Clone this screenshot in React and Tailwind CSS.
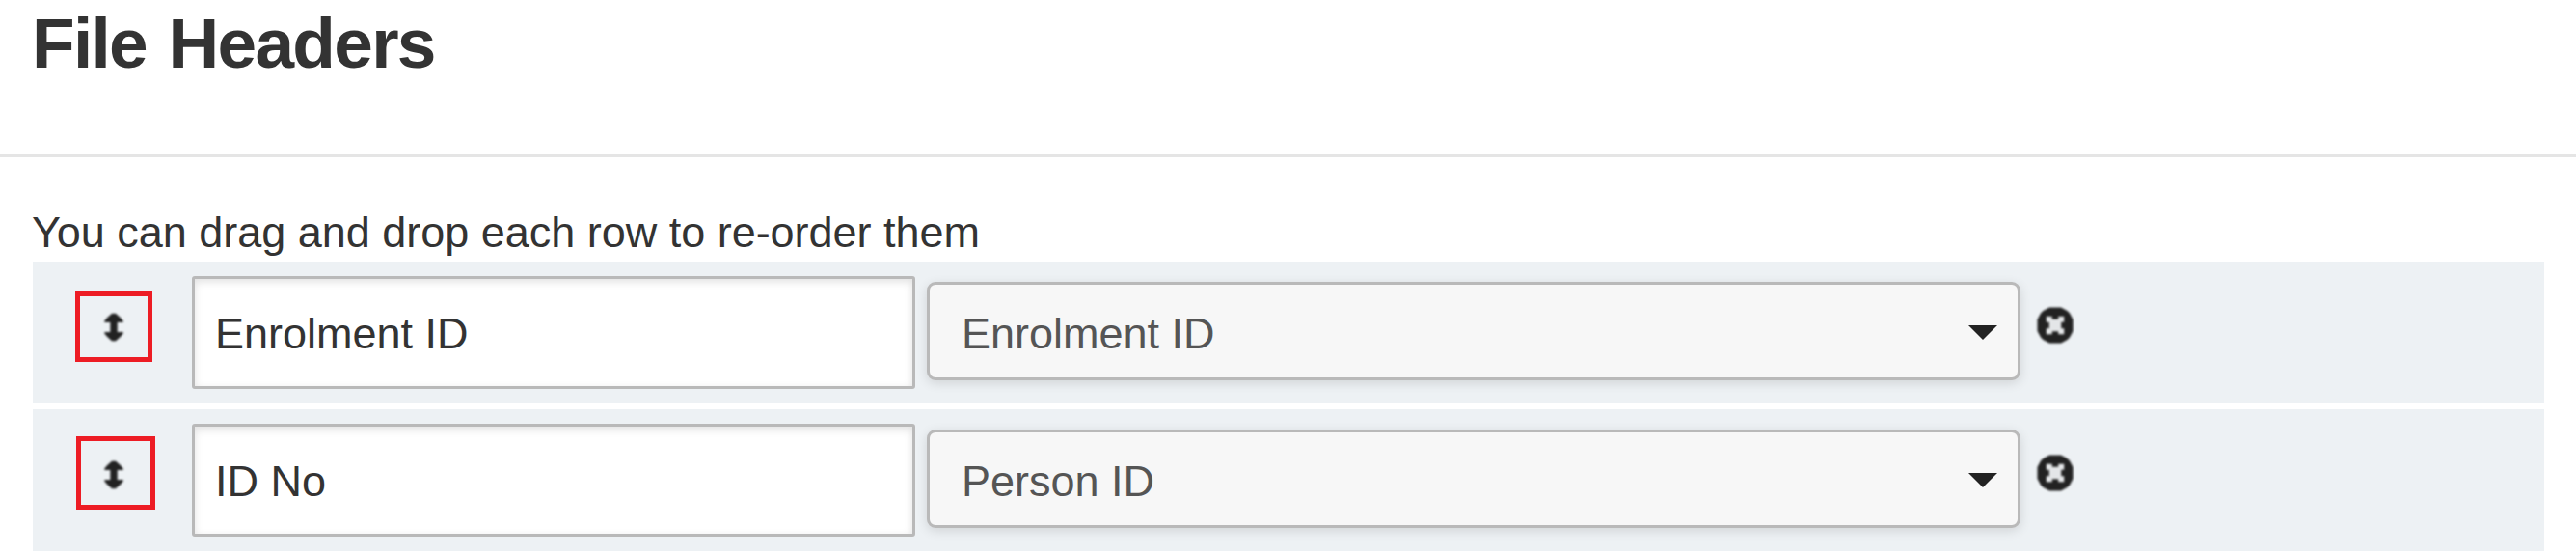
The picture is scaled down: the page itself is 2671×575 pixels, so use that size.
import { useState } from 'react';

const initialRows = [
  { id: 1, header: 'Enrolment ID', field: 'Enrolment ID', highlight: 'left-[44px] top-[31px] w-[80px] h-[73px]' },
  { id: 2, header: 'ID No', field: 'Person ID', highlight: 'left-[45px] top-[28px] w-[82px] h-[76px]' },
];

function DragIcon() {
  return (
    <svg className="block w-6 h-8 blur-[0.8px]" viewBox="0 0 24 32" fill="#222">
      <path d="M10 1.800h4l5 4.400 2.700 3.200v1.600h-6v10h6v1.600l-2.700 3.200-5 4.400h-4l-5-4.400-2.700-3.200v-1.600h6v-10h-6v-1.600l2.700-3.200z" />
    </svg>
  );
}

function RemoveIcon() {
  return (
    <svg className="block w-10 h-10 blur-[0.8px]" viewBox="0 0 40 40">
      <path d="M14 1.500h12L32.500 5l2.500 2.500 3.500 6.500v12L35 32.500 32.500 35 26 38.500H14L7.500 35 5 32.500 1.500 26V14L5 7.500 7.500 5z" fill="#222" />
      <path d="M10.800 10.800h6v3h6.400v-3h6v6h-3v6.400h3v6h-6v-3h-6.400v3h-6v-6h3v-6.400h-3z" fill="#e4e6e8" />
    </svg>
  );
}

export default function App() {
  const [rows, setRows] = useState(initialRows);

  const updateHeader = (id, header) => setRows(rows.map(r => (r.id === id ? { ...r, header } : r)));
  const removeRow = (id) => setRows(rows.filter(r => r.id !== id));

  return (
    <div className="w-full h-[575px] overflow-hidden bg-white text-[#333] font-['Liberation_Sans',Arial,sans-serif]">
      <header className="h-[163px] pl-[33px] pt-[9px] border-b-[3px] border-[#e5e5e5]">
        <h1 className="text-[73px] leading-[72px] font-bold tracking-[-1.7px] [word-spacing:4px]">File Headers</h1>
      </header>

      <main className="pl-[34px] pr-[33px] pt-[47px]">
        <p className="-ml-px text-[45px] leading-[61px] tracking-[-0.02px]">You can drag and drop each row to re-order them</p>

        <ul className="flex flex-col gap-1.5">
          {rows.map((row) => (
            <li key={row.id} className="relative flex items-start h-[147px] bg-[#edf1f4]">
              <div className="w-[165px] pl-[72px] pt-[52px] cursor-move">
                <DragIcon />
              </div>
              <input
                type="text"
                value={row.header}
                onChange={(e) => updateHeader(row.id, e.target.value)}
                className="mt-[15px] w-[750px] h-[117px] px-[21px] pt-[3px] text-[45px] bg-white border-[3px] border-[#b9b9b9] rounded-[3px] shadow-[inset_0_3px_9px_rgba(0,0,0,0.12)] outline-none"
              />
              <button className="mt-[21px] ml-3 w-[1134px] h-[102px] pl-[33px] pr-[21px] pt-[3px] flex items-center justify-between text-[45px] text-[#555] bg-[#f7f7f7] border-[3px] border-[#b9b9b9] rounded-[9px] shadow-[0_3px_12px_rgba(0,0,0,0.12)]">
                <span className="pt-0.5">{row.field}</span>
                <span className="border-x-[15px] border-x-transparent border-t-[15px] border-t-[#222]" />
              </button>
              <button className="mt-[46px] ml-4" aria-label="Remove row" onClick={() => removeRow(row.id)}>
                <RemoveIcon />
              </button>
              <span className={`absolute border-[5px] border-[#ed1c24] pointer-events-none ${row.highlight}`} />
            </li>
          ))}
        </ul>
      </main>
    </div>
  );
}
